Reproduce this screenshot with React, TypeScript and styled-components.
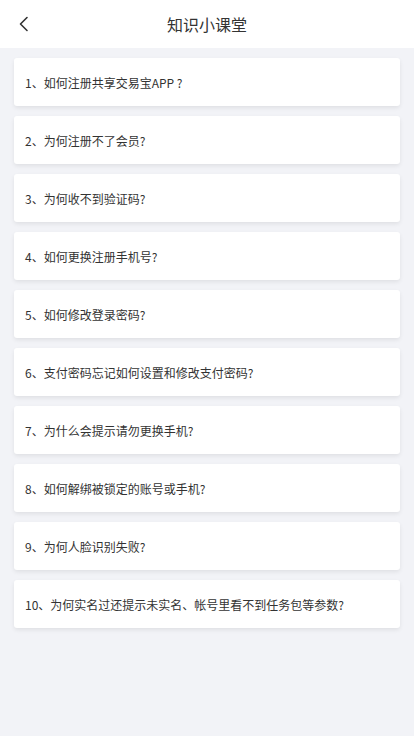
import React from "react";
import styled, { createGlobalStyle } from "styled-components";

const Global = createGlobalStyle`
  html, body { margin: 0; padding: 0; background: #f2f3f7; }
  body { font-family: "Noto Sans CJK SC", "Noto Sans", sans-serif; }
`;

const Page = styled.div`
  min-height: 736px;
  background: #f2f3f7;
`;

const Header = styled.header`
  height: 48px;
  background: #fff;
  display: flex;
  align-items: center;
  justify-content: center;
  position: relative;
`;

const Back = styled.button`
  position: absolute;
  left: 14px;
  top: 14px;
  width: 20px;
  height: 20px;
  padding: 0;
  border: 0;
  background: none;
  display: flex;
  align-items: center;
  justify-content: center;
`;

const Title = styled.h1`
  margin: 0;
  font-size: 16px;
  font-weight: 400;
  color: #333;
`;

const List = styled.ul`
  list-style: none;
  margin: 0;
  padding: 10px 14px;
  display: flex;
  flex-direction: column;
  gap: 10px;
`;

const Card = styled.li`
  height: 48px;
  background: #fff;
  border-radius: 3px;
  box-shadow: 0 2px 4px rgba(0, 0, 0, 0.08);
  display: flex;
  align-items: center;
  padding: 0 11px;
  font-size: 12px;
  color: #333;
`;

const items = [
  "1、如何注册共享交易宝APP ?",
  "2、为何注册不了会员?",
  "3、为何收不到验证码?",
  "4、如何更换注册手机号?",
  "5、如何修改登录密码?",
  "6、支付密码忘记如何设置和修改支付密码?",
  "7、为什么会提示请勿更换手机?",
  "8、如何解绑被锁定的账号或手机?",
  "9、为何人脸识别失败?",
  "10、为何实名过还提示未实名、帐号里看不到任务包等参数?",
];

export default function App() {
  return (
    <Page>
      <Global />
      <Header>
        <Back aria-label="返回">
          <svg width="14" height="16" viewBox="0 0 14 16" fill="none">
            <path d="M10 1.5 L3.5 8 L10 14.5" stroke="#333" strokeWidth="1.6" strokeLinecap="round" strokeLinejoin="round" />
          </svg>
        </Back>
        <Title>知识小课堂</Title>
      </Header>
      <List>
        {items.map((t) => (
          <Card key={t}>{t}</Card>
        ))}
      </List>
    </Page>
  );
}
